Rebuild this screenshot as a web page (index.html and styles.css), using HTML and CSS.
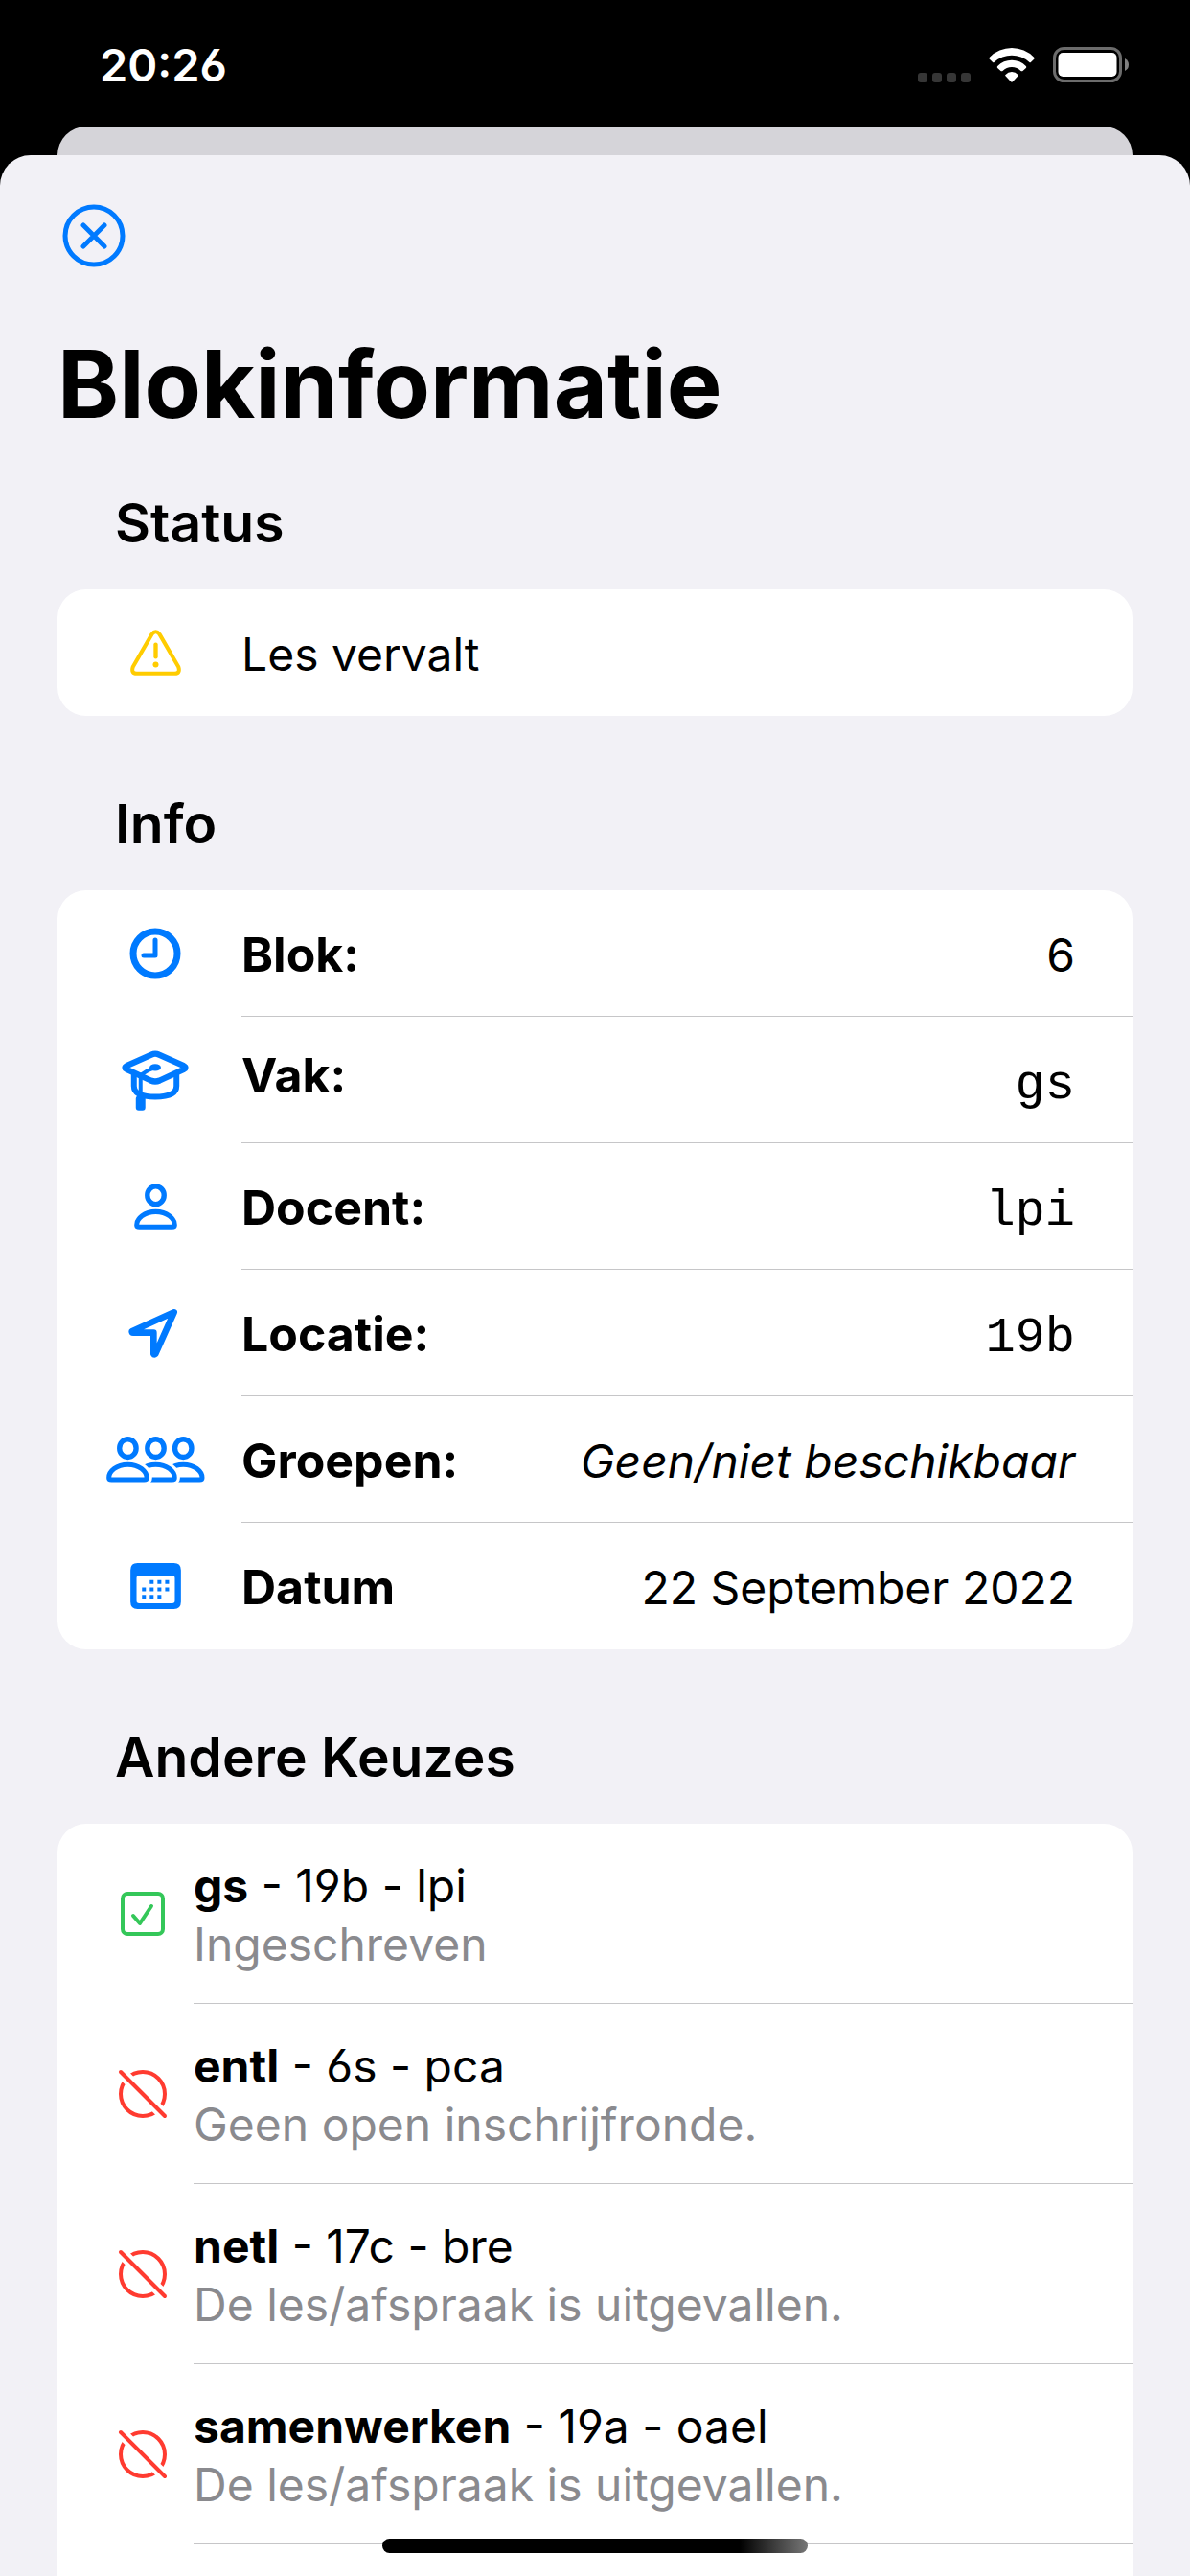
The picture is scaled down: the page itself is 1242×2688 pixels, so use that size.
FILE: index.html
```html
<!DOCTYPE html>
<html lang="nl">
<head>
<meta charset="utf-8">
<meta name="viewport" content="width=device-width, initial-scale=1">
<title>Blokinformatie</title>
<link rel="stylesheet" href="styles.css">
</head>
<body>
<div class="screen">
  <header class="status-bar">
    <time class="clock">20:26</time>
    <div class="indicators">
      <span class="signal"><i></i><i></i><i></i><i></i></span>
      <svg class="wifi" viewBox="0 0 143 108" width="48" height="36" aria-hidden="true">
        <path d="M2 29A98 98 0 0 1 141 29Q144 32 141 35L131 45Q129 47 126 44A81 81 0 0 0 17 44Q14 47 12 45L2 35Q-1 32 2 29Z"/>
        <path d="M27 57A62 62 0 0 1 116 57Q119 60 116 63L106 72Q103 74 100 72A40 40 0 0 0 43 72Q40 74 37 72L27 63Q24 60 27 57Z"/>
        <path d="M52 84A26 26 0 0 1 91 84Q93 86 91 88L75 105Q71.500 109 68 105L52 88Q50 86 52 84Z"/>
      </svg>
      <svg class="battery" viewBox="0 0 79 37" width="79" height="37" aria-hidden="true">
        <rect x="1.500" y="1.500" width="69" height="34" rx="10" fill="none" stroke="#6c6c6c" stroke-width="3"/>
        <rect x="5.500" y="6" width="61" height="25" rx="5" fill="#fff"/>
        <path d="M75 12Q79 14 79 18.500T75 25Z" fill="#808080"/>
      </svg>
    </div>
  </header>
  <div class="back-card"></div>

  <main class="sheet">
    <button class="close" type="button" aria-label="Sluiten">
      <svg viewBox="0 0 66 66" width="66" height="66" aria-hidden="true">
        <circle cx="33" cy="33" r="30"/>
        <path d="M22 22L44 44M44 22L22 44"/>
      </svg>
    </button>
    <h1 class="title">Blokinformatie</h1>

    <section class="section">
      <h2 class="heading">Status</h2>
      <div class="card">
        <div class="row">
          <svg class="icon warning" viewBox="0 0 158 142" width="53" height="48" aria-hidden="true">
            <path d="M67 14Q79-2 91 14L150 116Q156 136 138 136H20Q2 136 8 116Z" stroke-width="12"/>
            <path d="M79 46V84" stroke-width="13"/>
            <circle class="solid" cx="79" cy="108" r="9"/>
          </svg>
          <span class="body">Les vervalt</span>
        </div>
      </div>
    </section>

    <section class="section">
      <h2 class="heading">Info</h2>
      <dl class="card">
        <div class="row">
          <svg class="icon" viewBox="0 0 54 54" width="54" height="54" aria-hidden="true">
            <circle cx="27" cy="27" r="23" stroke-width="7"/>
            <path d="M27 13V29H15" stroke-width="5"/>
          </svg>
          <div class="body"><dt>Blok:</dt><dd>6</dd></div>
        </div>
        <div class="row">
          <svg class="icon" viewBox="0 0 216 190" width="72" height="63" aria-hidden="true">
            <path d="M96 14Q108 8 120 14L198 49Q208 54 198 60L122 95Q108 101 94 95L18 60Q8 54 18 49Z" stroke-width="19"/>
            <path d="M41 78V112Q41 146 108 146T175 112V78" stroke-width="18"/>
            <path d="M108 54L84 64L62 78V150" stroke-width="12"/>
            <ellipse class="solid" cx="108" cy="54" rx="18" ry="11"/>
            <rect class="solid" x="47" y="143" width="30" height="46" rx="9"/>
          </svg>
          <div class="body"><dt class="raised">Vak:</dt><dd class="mono">gs</dd></div>
        </div>
        <div class="row">
          <svg class="icon" viewBox="0 0 134 142" width="45" height="48" aria-hidden="true">
            <ellipse cx="67" cy="36" rx="26" ry="28" stroke-width="16"/>
            <path d="M8 128C8 108 32 87 67 87S126 108 126 128Q126 134 118 134H16Q8 134 8 128Z" stroke-width="15"/>
          </svg>
          <div class="body"><dt>Docent:</dt><dd class="mono">lpi</dd></div>
        </div>
        <div class="row">
          <svg class="icon" viewBox="0 0 174 174" width="58" height="58" aria-hidden="true">
            <path d="M146 22L14 82Q14 86 18 86H82V152Q84 156 88 152Z" stroke-width="20"/>
          </svg>
          <div class="body"><dt>Locatie:</dt><dd class="mono">19b</dd></div>
        </div>
        <div class="row">
          <svg class="icon" viewBox="0 0 308 143" width="103" height="48" aria-hidden="true">
            <defs>
              <path id="shoulders" d="M8 128C8 108 32 87 67 87S126 108 126 128Q126 134 118 134H16Q8 134 8 128Z"/>
            </defs>
            <use href="#shoulders" x="173" stroke-width="15"/>
            <use href="#shoulders" x="87" class="cutout" stroke-width="34"/>
            <use href="#shoulders" x="87" stroke-width="15"/>
            <use href="#shoulders" class="cutout" stroke-width="34"/>
            <use href="#shoulders" stroke-width="15"/>
            <ellipse cx="67" cy="36" rx="26" ry="28" stroke-width="16"/>
            <ellipse cx="154" cy="36" rx="26" ry="28" stroke-width="16"/>
            <ellipse cx="240" cy="36" rx="26" ry="28" stroke-width="16"/>
          </svg>
          <div class="body"><dt>Groepen:</dt><dd><em>Geen/niet beschikbaar</em></dd></div>
        </div>
        <div class="row">
          <svg class="icon" viewBox="0 0 157 143" width="53" height="48" aria-hidden="true">
            <path class="solid" fill-rule="evenodd" d="M22 0H135Q157 0 157 22V121Q157 143 135 143H22Q0 143 0 121V22Q0 0 22 0ZM27 39Q19 39 19 47V117Q19 125 27 125H130Q138 125 138 117V47Q138 39 130 39Z"/>
            <path class="solid" d="M60 53h12v12h-12zM84 53h12v12h-12zM108 53h12v12h-12zM36 76h12v12h-12zM60 76h12v12h-12zM84 76h12v12h-12zM108 76h12v12h-12zM36 99h12v12h-12zM60 99h12v12h-12zM84 99h12v12h-12z"/>
          </svg>
          <div class="body"><dt>Datum</dt><dd>22 September 2022</dd></div>
        </div>
      </dl>
    </section>

    <section class="section section-last">
      <h2 class="heading">Andere Keuzes</h2>
      <ul class="card card-open">
        <li class="choice">
          <svg class="icon enrolled" viewBox="0 0 46 46" width="46" height="46" aria-hidden="true">
            <rect x="2" y="2" width="42" height="42" rx="5" stroke-width="4"/>
            <path d="M13 25L20 33L32 15" stroke-width="4"/>
          </svg>
          <div class="choice-text"><p><b>gs</b> - 19b - lpi</p><p class="note">Ingeschreven</p></div>
        </li>
        <li class="choice">
          <svg class="icon blocked" viewBox="0 0 52 52" width="52" height="52" aria-hidden="true">
            <circle cx="26" cy="26" r="23" stroke-width="4"/><path class="cutout" d="M0 0L52 52" stroke-width="12"/><path d="M3 3L49 49" stroke-width="4"/>
          </svg>
          <div class="choice-text"><p><b>entl</b> - 6s - pca</p><p class="note">Geen open inschrijfronde.</p></div>
        </li>
        <li class="choice">
          <svg class="icon blocked" viewBox="0 0 52 52" width="52" height="52" aria-hidden="true">
            <circle cx="26" cy="26" r="23" stroke-width="4"/><path class="cutout" d="M0 0L52 52" stroke-width="12"/><path d="M3 3L49 49" stroke-width="4"/>
          </svg>
          <div class="choice-text"><p><b>netl</b> - 17c - bre</p><p class="note">De les/afspraak is uitgevallen.</p></div>
        </li>
        <li class="choice">
          <svg class="icon blocked" viewBox="0 0 52 52" width="52" height="52" aria-hidden="true">
            <circle cx="26" cy="26" r="23" stroke-width="4"/><path class="cutout" d="M0 0L52 52" stroke-width="12"/><path d="M3 3L49 49" stroke-width="4"/>
          </svg>
          <div class="choice-text"><p><b>samenwerken</b> - 19a - oael</p><p class="note">De les/afspraak is uitgevallen.</p></div>
        </li>
      </ul>
    </section>
  </main>
  <div class="home-indicator"></div>
</div>
</body>
</html>
```

FILE: styles.css
```css
* {
  box-sizing: border-box;
}

body,
h1,
h2,
p,
dl,
dd,
ul {
  margin: 0;
  padding: 0;
}

body {
  background: #000;
  color: #000;
  font-family: Inter, "Liberation Sans", sans-serif;
  font-size: 48px;
  line-height: 61px;
}

.screen {
  display: flex;
  flex-direction: column;
  min-height: 100vh;
}

/* Device status bar */
.status-bar {
  display: flex;
  justify-content: space-between;
  align-items: flex-start;
  height: 132px;
  padding: 38px 64px 0 104px;
  color: #fff;
}

.clock {
  padding-top: 1px;
  font-size: 47px;
  font-weight: 600;
  line-height: 58px;
  font-feature-settings: "cv03";
}

.indicators {
  display: flex;
  align-items: flex-end;
  gap: 19px;
  height: 48px;
}

.signal {
  display: flex;
  gap: 5px;
}

.signal i {
  width: 10px;
  height: 10px;
  border-radius: 3px;
  background: #363636;
}

.wifi {
  fill: #fff;
}

/* Sheet */
.back-card {
  height: 30px;
  margin: 0 60px;
  border-radius: 30px 30px 0 0;
  background: #d5d4d9;
}

.sheet {
  display: flex;
  flex: 1;
  flex-direction: column;
  padding: 51px 60px 0;
  border-radius: 32px 32px 0 0;
  background: #f2f1f6;
}

.close {
  align-self: flex-start;
  width: 76px;
  height: 66px;
  margin-bottom: 62px;
  padding: 0 5px;
  border: 0;
  background: none;
}

.close svg {
  display: block;
  fill: none;
  stroke: #007aff;
  stroke-width: 5;
  stroke-linecap: round;
}

.title {
  margin-bottom: 49px;
  font-size: 97px;
  font-weight: 700;
  line-height: 120px;
}

.section {
  display: flex;
  flex-direction: column;
  margin-bottom: 77px;
}

.section-last {
  flex: 1;
  margin-bottom: 0;
}

.heading {
  margin-bottom: 33px;
  padding: 0 60px;
  font-size: 57px;
  font-weight: 600;
  line-height: 72px;
}

.card {
  overflow: hidden;
  border-radius: 30px;
  background: #fff;
}

.card-open {
  flex: 1;
  border-radius: 30px 30px 0 0;
}

/* Icons */
.icon {
  justify-self: center;
  fill: none;
  stroke: #007aff;
  stroke-linecap: round;
  stroke-linejoin: round;
}

.solid {
  fill: #007aff;
  stroke: none;
}

.warning {
  stroke: #ffcc00;
}

.warning .solid {
  fill: #ffcc00;
}

.enrolled {
  stroke: #34c759;
}

.blocked {
  stroke: #ff3b30;
}

.cutout {
  fill: #fff;
  stroke: #fff;
}

/* Info rows */
.row {
  display: grid;
  grid-template-columns: 132px 1fr;
  column-gap: 24px;
  align-items: center;
  height: 132px;
  padding-left: 36px;
}

.row .body {
  display: flex;
  justify-content: space-between;
  align-items: center;
  height: 132px;
  padding: 3px 60px 0 0;
}

.row:not(:last-child) .body {
  border-bottom: 1px solid #c6c6c8;
}

dt {
  font-size: 50px;
  font-weight: 700;
}

.raised {
  padding-bottom: 12px;
}

.mono {
  padding-top: 8px;
  font-family: "Liberation Mono", monospace;
  font-size: 52px;
}

/* Choices */
.choice {
  display: grid;
  grid-template-columns: 106px 1fr;
  align-items: center;
  padding-left: 36px;
}

.choice-text {
  padding: 34px 60px 31px 0;
  border-bottom: 1px solid #c6c6c8;
  font-feature-settings: "cv03", "cv04";
}

.note {
  color: #8a8a8e;
}

.home-indicator {
  position: fixed;
  bottom: 24px;
  left: 50%;
  width: 444px;
  height: 15px;
  margin-left: -222px;
  border-radius: 8px;
  background: linear-gradient(90deg, #000 84%, #777);
}
```
